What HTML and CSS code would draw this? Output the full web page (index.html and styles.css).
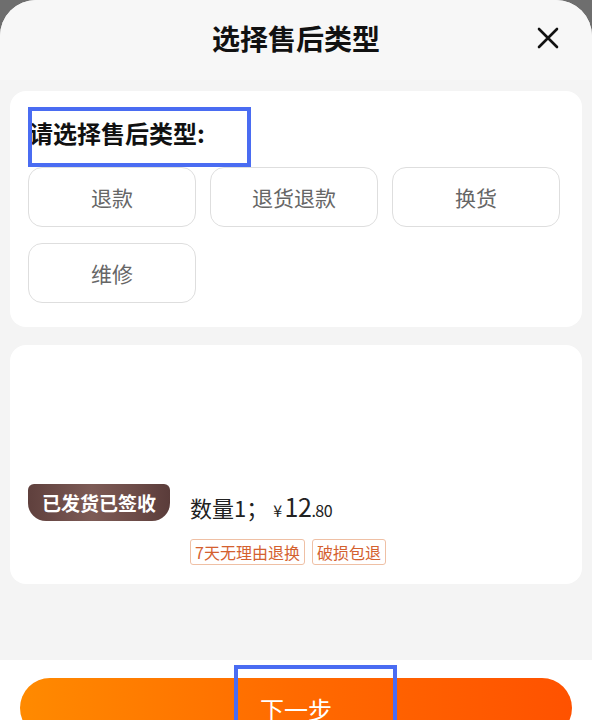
FILE: index.html
```html
<!DOCTYPE html>
<html lang="zh-CN">
<head>
<meta charset="utf-8">
<title>选择售后类型</title>
<link rel="stylesheet" href="styles.css">
</head>
<body>
<div class="sheet">
  <header class="header">
    <span></span>
    <h1 class="title">选择售后类型</h1>
    <button class="close" aria-label="关闭">
      <svg width="22" height="22" viewBox="0 0 22 22"><path d="M2 2 L20 20 M20 2 L2 20" stroke="#111" stroke-width="2.6" stroke-linecap="round" fill="none"/></svg>
    </button>
  </header>
  <main class="main">
    <section class="card types">
      <div class="label">请选择售后类型:</div>
      <div class="options">
        <div class="opt">退款</div>
        <div class="opt">退货退款</div>
        <div class="opt">换货</div>
        <div class="opt">维修</div>
      </div>
    </section>
    <section class="card goods">
      <div class="pic">
        <div class="badge">已发货已签收</div>
      </div>
      <div class="info">
        <div class="qty"><span>数量1；</span><span class="price"><span class="yen">¥</span><span class="int">12</span><span class="dec">.80</span></span></div>
        <div class="tags">
          <span class="tag">7天无理由退换</span>
          <span class="tag">破损包退</span>
        </div>
      </div>
    </section>
  </main>
  <footer class="footer">
    <button class="next">下一步</button>
  </footer>
  <div class="mark mark-label"></div>
  <div class="mark mark-next"></div>
</div>
</body>
</html>
```
FILE: styles.css
```css
* { box-sizing: border-box; }
html, body { margin: 0; padding: 0; }
body {
  background: #6e6e6e;
  font-family: "Noto Sans CJK SC", "Noto Sans", sans-serif;
  width: 592px;
  height: 720px;
  overflow: hidden;
}
.sheet {
  position: relative;
  width: 592px;
  height: 720px;
  background: #f4f4f4;
  border-radius: 36px 36px 0 0;
  display: flex;
  flex-direction: column;
  overflow: hidden;
}
.header {
  height: 80px;
  flex: none;
  background: #f7f7f7;
  display: grid;
  grid-template-columns: 1fr auto 1fr;
  align-items: center;
  padding-bottom: 4px;
}
.title {
  margin: 0;
  font-size: 28px;
  font-weight: 700;
  color: #111;
  line-height: 38px;
}
.close {
  justify-self: end;
  margin-right: 33px;
  border: 0;
  background: none;
  padding: 0;
  width: 22px;
  height: 22px;
  display: flex;
}
.main {
  flex: 1;
  padding: 11px 10px 0;
  display: flex;
  flex-direction: column;
  gap: 18px;
}
.card {
  background: #fff;
  border-radius: 16px;
}
.types {
  padding: 27px 18px 24px;
}
.label {
  font-size: 24px;
  font-weight: 700;
  color: #111;
  line-height: 30px;
  margin-bottom: 19px;
  padding-left: 1px;
}
.options {
  display: grid;
  grid-template-columns: repeat(3, 168px);
  column-gap: 14px;
  row-gap: 16px;
}
.opt {
  height: 60px;
  border: 1px solid #dedede;
  border-radius: 14px;
  display: flex;
  align-items: center;
  justify-content: center;
  font-size: 21px;
  color: #666;
}
.goods {
  height: 239px;
  padding: 34px 18px 0;
  display: flex;
  gap: 20px;
  align-items: flex-start;
}
.pic {
  width: 142px;
  height: 142px;
  display: flex;
  flex-direction: column;
  justify-content: flex-end;
}
.badge {
  height: 37px;
  border-radius: 6px 6px 18px 18px;
  background: linear-gradient(90deg, #5f403d 0%, #7d5b56 45%, #6d4c48 75%, #5a3c3a 100%);
  color: #fff;
  font-size: 19px;
  font-weight: 700;
  display: flex;
  align-items: center;
  justify-content: center;
}
.info {
  margin-top: 111px;
  display: flex;
  flex-direction: column;
  gap: 13px;
}
.qty {
  font-size: 22px;
  color: #222;
  line-height: 32px;
  display: flex;
  align-items: baseline;
  gap: 5px;
}
.price { color: #222; letter-spacing: -0.5px; }
.yen { font-size: 16px; margin-right: 3px; }
.int { font-size: 25px; }
.dec { font-size: 16px; }
.tags {
  display: flex;
  gap: 7px;
}
.tag {
  height: 26px;
  border: 1px solid #efc0a5;
  border-radius: 3px;
  padding: 0 4px;
  font-size: 16px;
  color: #d4612f;
  display: flex;
  align-items: center;
}
.footer {
  height: 60px;
  flex: none;
  background: #fff;
  padding: 18px 20px 0;
}
.next {
  width: 100%;
  height: 60px;
  border: 0;
  border-radius: 30px;
  background: linear-gradient(90deg, #ff8a00 0%, #ff6a00 50%, #ff5200 100%);
  color: #fff;
  font-family: inherit;
  font-size: 24px;
  padding: 0;
  display: block;
}
.mark {
  position: absolute;
  border: 4px solid #4a6cf2;
  pointer-events: none;
}
.mark-label {
  left: 28px;
  top: 107px;
  width: 223px;
  height: 60px;
}
.mark-next {
  left: 234px;
  top: 665px;
  width: 163px;
  height: 80px;
}
```
